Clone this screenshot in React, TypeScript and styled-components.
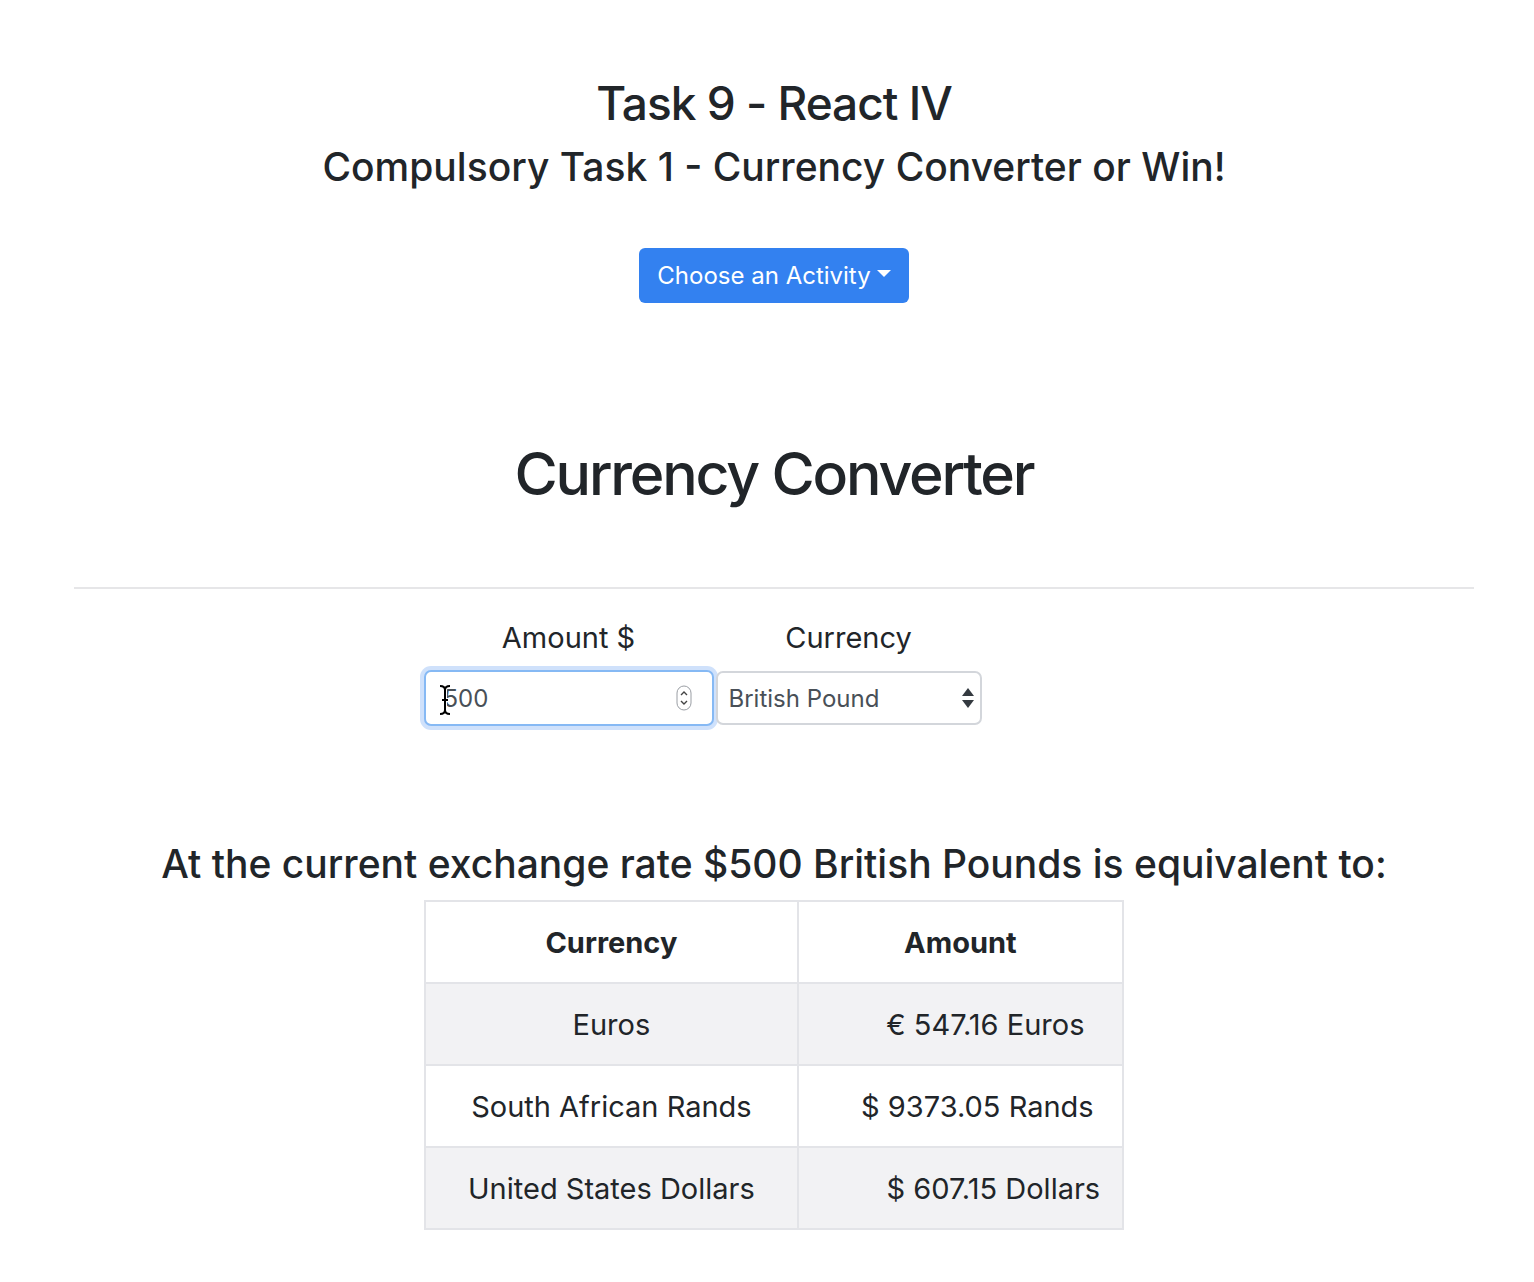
import React from "react";
import styled, { createGlobalStyle } from "styled-components";

const Global = createGlobalStyle`
  html, body { margin: 0; padding: 0; background: #fff; }
  body { font-family: Inter, "Noto Sans", "Liberation Sans", sans-serif; color: #212529; }
  * { box-sizing: border-box; }
`;

const Page = styled.div`
  width: 1534px;
  min-height: 1282px;
  display: flex;
  flex-direction: column;
  align-items: center;
  padding: 74px 0 0 14px;
`;

const Title = styled.h2`
  margin: 0;
  font-size: 46px;
  font-weight: 500;
  letter-spacing: -1px;
  line-height: 58px;
  text-align: center;
`;

const Subtitle = styled.h3`
  margin: 11px 0 0;
  font-size: 39px;
  font-weight: 500;
  line-height: 48px;
  text-align: center;
`;

const DropButton = styled.button`
  margin-top: 57px;
  width: 270px;
  height: 55px;
  border: none;
  border-radius: 6px;
  background: #3381f0;
  color: #fff;
  font-family: inherit;
  font-size: 24px;
  display: flex;
  align-items: center;
  justify-content: center;
  gap: 6px;
  padding: 0;
  &::after {
    content: "";
    display: inline-block;
    border-top: 7px solid #fff;
    border-left: 7px solid transparent;
    border-right: 7px solid transparent;
    margin-bottom: 4px;
  }
`;

const SectionTitle = styled.h1`
  margin: 134px 0 0;
  font-size: 59px;
  font-weight: 500;
  letter-spacing: -2.2px;
  line-height: 74px;
  text-align: center;
`;

const Rule = styled.hr`
  width: 1400px;
  margin: 76px 0 0;
  border: 0;
  border-top: 2px solid #e6e6e8;
`;

const FormRow = styled.div`
  display: flex;
  align-items: flex-start;
  gap: 2px;
  margin: 29px 143px 0 0;
`;

const Field = styled.div<{ $w: number }>`
  width: ${(p) => p.$w}px;
  display: flex;
  flex-direction: column;
  align-items: center;
`;

const Label = styled.label`
  font-size: 29px;
  line-height: 40px;
  margin-bottom: 12px;
`;

const InputBox = styled.div<{ $focus?: boolean }>`
  position: relative;
  width: 100%;
  height: ${(p) => (p.$focus ? 56 : 54)}px;
  margin-top: ${(p) => (p.$focus ? 0 : 1)}px;
  border: 2px solid ${(p) => (p.$focus ? "#86b9f4" : "#d3d6db")};
  border-radius: 7px;
  box-shadow: ${(p) => (p.$focus ? "0 0 0 4px #cfe1fb" : "none")};
  background: #fff;
  display: flex;
  align-items: center;
  padding-left: ${(p) => (p.$focus ? 18 : 11)}px;
  font-size: 24px;
  color: #495057;
`;

const Overlay = styled.svg<{ $x: number; $y: number }>`
  position: absolute;
  left: ${(p) => p.$x}px;
  top: ${(p) => p.$y}px;
`;

const Exchange = styled.h3`
  margin: 114px 0 0;
  font-size: 39px;
  font-weight: 500;
  line-height: 48px;
  text-align: center;
`;

const Table = styled.table`
  margin-top: 12px;
  border-collapse: collapse;
  width: 700px;
  font-size: 29px;
`;

const Th = styled.th<{ $w: number }>`
  width: ${(p) => p.$w}px;
  height: 82px;
  border: 2px solid #e3e4e8;
  font-weight: 700;
  text-align: center;
  padding: 0;
`;

const Row = styled.tr<{ $striped: boolean }>`
  background: ${(p) => (p.$striped ? "#f2f2f4" : "#fff")};
`;

const Td = styled.td<{ $shift?: number }>`
  height: 82px;
  border: 2px solid #e3e4e8;
  text-align: center;
  padding: 0 0 0 ${(p) => (p.$shift ?? 0) * 2}px;
`;

const rows = [
  { name: "Euros", amount: "€ 547.16 Euros", shift: 25 },
  { name: "South African Rands", amount: "$ 9373.05 Rands", shift: 17 },
  { name: "United States Dollars", amount: "$ 607.15 Dollars", shift: 33 },
];

export default function App() {
  return (
    <>
      <Global />
      <Page>
        <Title>Task 9 - React IV</Title>
        <Subtitle>Compulsory Task 1 - Currency Converter or Win!</Subtitle>
        <DropButton>Choose an Activity</DropButton>
        <SectionTitle>Currency Converter</SectionTitle>
        <Rule />
        <FormRow>
          <Field $w={290}>
            <Label>Amount $</Label>
            <InputBox $focus>
              500
              <Overlay $x={250} $y={13} width="16" height="26" viewBox="0 0 16 26">
                <rect x="1" y="1" width="14" height="24" rx="7" fill="#fff" stroke="#9a9ea4" strokeWidth="1" />
                <path d="M5 10 L8 7 L11 10" fill="none" stroke="#444" strokeWidth="1.4" />
                <path d="M5 16 L8 19 L11 16" fill="none" stroke="#444" strokeWidth="1.4" />
              </Overlay>
              <Overlay $x={12} $y={12} width="14" height="32" viewBox="0 0 14 32">
                <path d="M2 2 Q7 2 7 6 L7 26 Q7 30 2 30 M12 2 Q7 2 7 6 M7 26 Q7 30 12 30 M4 16 L10 16" fill="none" stroke="#fff" strokeWidth="4" />
                <path d="M2 2 Q7 2 7 6 L7 26 Q7 30 2 30 M12 2 Q7 2 7 6 M7 26 Q7 30 12 30 M4 16 L10 16" fill="none" stroke="#000" strokeWidth="2" />
              </Overlay>
            </InputBox>
          </Field>
          <Field $w={266}>
            <Label>Currency</Label>
            <InputBox>
              British Pound
              <Overlay $x={243} $y={13} width="14" height="24" viewBox="0 0 14 24">
                <path d="M1 10 L7 2 L13 10 Z" fill="#343a40" />
                <path d="M1 14 L7 22 L13 14 Z" fill="#343a40" />
              </Overlay>
            </InputBox>
          </Field>
        </FormRow>
        <Exchange>At the current exchange rate $500 British Pounds is equivalent to:</Exchange>
        <Table>
          <thead>
            <tr>
              <Th $w={374}>Currency</Th>
              <Th $w={326}>Amount</Th>
            </tr>
          </thead>
          <tbody>
            {rows.map((r, i) => (
              <Row key={r.name} $striped={i % 2 === 0}>
                <Td>{r.name}</Td>
                <Td $shift={r.shift}>{r.amount}</Td>
              </Row>
            ))}
          </tbody>
        </Table>
      </Page>
    </>
  );
}
